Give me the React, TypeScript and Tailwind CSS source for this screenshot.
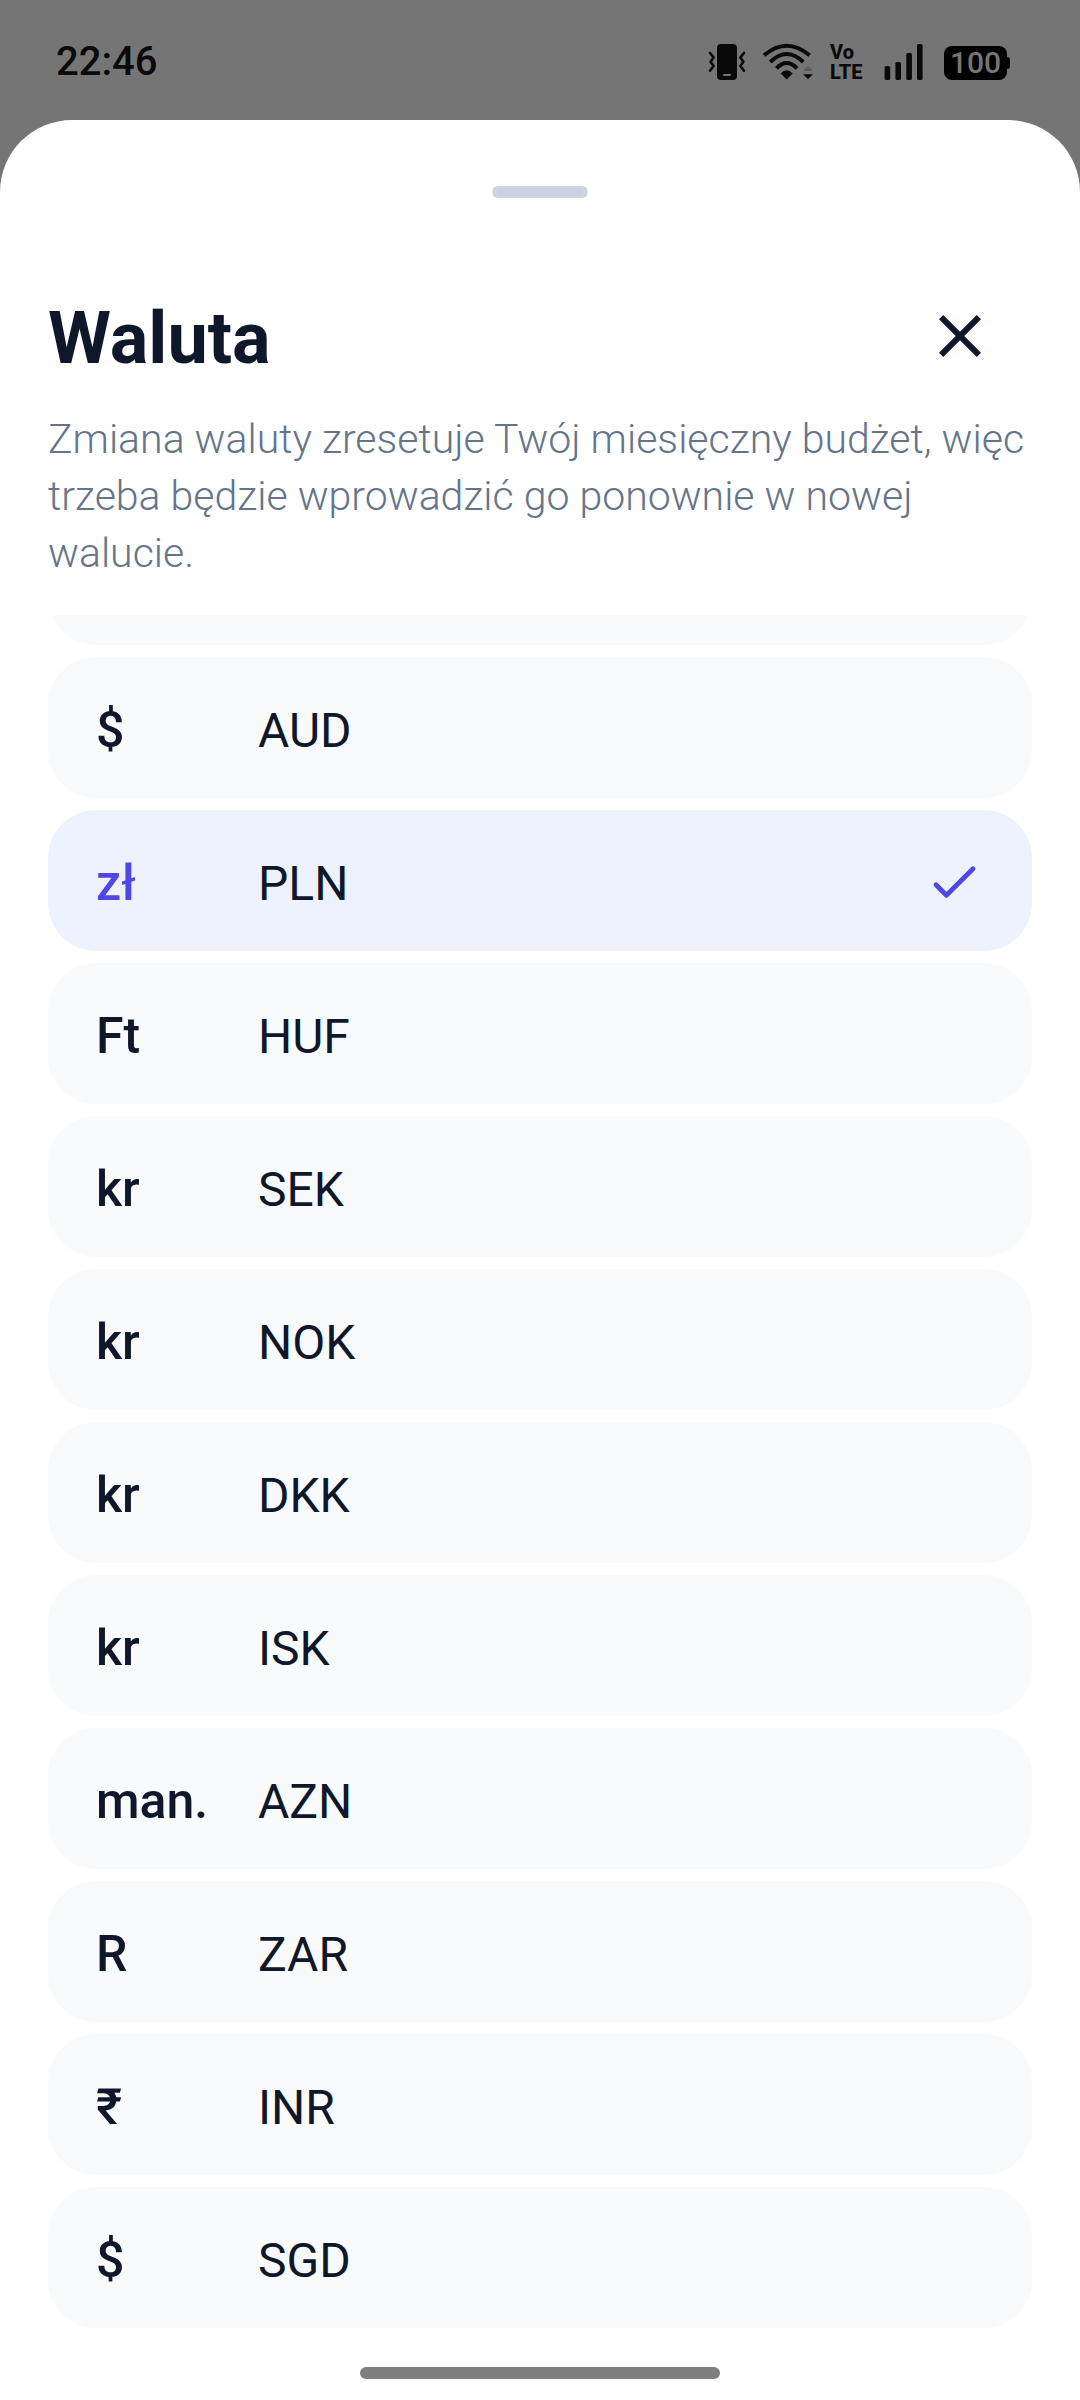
import { useState } from "react";
import clsx from "clsx";

type Currency = { code: string; symbol: string };

const currencies: Currency[] = [
  { code: "AUD", symbol: "$" },
  { code: "PLN", symbol: "zł" },
  { code: "HUF", symbol: "Ft" },
  { code: "SEK", symbol: "kr" },
  { code: "NOK", symbol: "kr" },
  { code: "DKK", symbol: "kr" },
  { code: "ISK", symbol: "kr" },
  { code: "AZN", symbol: "man." },
  { code: "ZAR", symbol: "R" },
  { code: "INR", symbol: "₹" },
  { code: "SGD", symbol: "$" },
];

function VibrateIcon() {
  return (
    <svg className="w-[38px] h-9" viewBox="0 0 38 36" fill="none">
      <path d="M13 0h12a4 4 0 0 1 4 4v28a4 4 0 0 1-4 4H13a4 4 0 0 1-4-4V4a4 4 0 0 1 4-4Z" fill="#0a0a0a" />
      <path d="M16 31h6" stroke="#757575" strokeWidth="2" strokeLinecap="round" />
      <path d="m2 9 3.6 4.4-3 4.4 3 4.2L2 26.7M36 9l-3.6 4.4 3 4.4-3 4.2 3.6 4.7" stroke="#0a0a0a" strokeWidth="2.6" strokeLinecap="round" strokeLinejoin="round" />
    </svg>
  );
}

function WifiIcon() {
  return (
    <svg className="w-[52px] h-[37px]" viewBox="0 0 52 37" fill="none">
      <path d="M2 12.3Q24.7-6.9 47.6 12.3M8.3 19Q24.7 3 41.3 19M14.5 25.3Q24.7 14.7 35 25.3" stroke="#0a0a0a" strokeWidth="4" />
      <path d="m24.7 36.4-6-6q6-6.4 12 0Z" fill="#0a0a0a" />
      <path d="m41 28 5-5 5 5Z" fill="#5c5c5c" />
      <path d="M41 31.3h10l-5 5Z" fill="#0a0a0a" />
    </svg>
  );
}

function VolteIcon() {
  return (
    <svg className="w-[34px] h-9 overflow-visible font-[Roboto,sans-serif] font-extrabold text-[20px]" viewBox="0 0 34 36" fill="#0a0a0a">
      <text x="0" y="15">Vo</text>
      <text x="0" y="35">LTE</text>
    </svg>
  );
}

function SignalIcon() {
  return (
    <svg className="w-10 h-9" viewBox="0 0 40 36" fill="#0a0a0a">
      <rect x="0.6" y="22" width="5.6" height="14" rx="1.6" />
      <rect x="11.4" y="18" width="5.6" height="18" rx="1.6" />
      <rect x="22.3" y="9" width="5.6" height="27" rx="1.6" />
      <rect x="33" y="0" width="5.6" height="36" rx="1.6" />
    </svg>
  );
}

function StatusBar() {
  return (
    <header className="h-30 shrink-0 flex items-end justify-between pl-14 pr-[70px] pb-10">
      <time className="text-[40px] leading-9 font-medium text-[#0a0a0a]">22:46</time>
      <div className="flex items-end">
        <VibrateIcon />
        <div className="ml-4"><WifiIcon /></div>
        <div className="ml-4"><VolteIcon /></div>
        <div className="ml-5"><SignalIcon /></div>
        <div className="ml-5 flex items-center">
          <span className="w-[63px] h-[34px] rounded-lg bg-black text-[#757575] text-[30px] leading-[34px] font-medium text-center">100</span>
          <span className="w-[3px] h-3 rounded-r-sm bg-black" />
        </div>
      </div>
    </header>
  );
}

function CurrencyRow({ currency, selected, onSelect }: { currency: Currency; selected: boolean; onSelect: () => void }) {
  return (
    <li className="shrink-0">
      <button
        type="button"
        aria-pressed={selected}
        onClick={onSelect}
        className={clsx("w-full h-[141px] px-12 rounded-[48px] flex items-center text-left", selected ? "bg-[#eef2ff]" : "bg-[#f8fafc]")}
      >
        <span className={clsx("w-[162px] pt-1 text-[50px] leading-[60px] font-medium", selected ? "text-[#4f46e5]" : "text-[#0f172a]")}>
          {currency.symbol}
        </span>
        <span className="flex-1 pt-1.5 text-[48px] leading-[60px] text-[#0f172a]">{currency.code}</span>
        {selected && (
          <svg className="size-[60px]" viewBox="0 0 60 60" fill="none" stroke="#4f46e5" strokeWidth="4.8" strokeLinecap="round" strokeLinejoin="round">
            <path d="M12 33.8 22.4 44.2 49 17.8" />
          </svg>
        )}
      </button>
    </li>
  );
}

export default function App() {
  const [selected, setSelected] = useState("PLN");

  return (
    <div className="h-screen flex flex-col bg-[#757575] font-[Roboto,sans-serif]">
      <StatusBar />
      <main className="flex-1 min-h-0 flex flex-col px-12 bg-white rounded-t-[72px]">
        <div className="mt-[66px] w-24 h-3 shrink-0 self-center rounded-full bg-[#cbd5e1]" />

        <div className="mt-[102px] flex items-start justify-between">
          <h1 className="text-[72px] leading-[78px] font-bold text-[#0f172a]">Waluta</h1>
          <button type="button" aria-label="Zamknij" className="px-9">
            <svg className="size-18" viewBox="0 0 24 24" fill="#0f172a">
              <path d="M19 6.41 17.59 5 12 10.59 6.41 5 5 6.41 10.59 12 5 17.59 6.41 19 12 13.41 17.59 19 19 17.59 13.41 12z" />
            </svg>
          </button>
        </div>
        <p className="mt-[33px] text-[41px] leading-[57px] font-light text-[#64748b]">
          Zmiana waluty zresetuje Twój miesięczny budżet, więc trzeba będzie wprowadzić go ponownie w nowej walucie.
        </p>

        <ul className="mt-[33px] flex-1 min-h-0 flex flex-col justify-end gap-3 overflow-hidden">
          <li aria-hidden="true" className="shrink-0 h-[141px] rounded-[48px] bg-[#f8fafc]" />
          {currencies.map((c) => (
            <CurrencyRow key={c.code} currency={c} selected={c.code === selected} onSelect={() => setSelected(c.code)} />
          ))}
        </ul>

        <div className="mt-[39px] mb-[21px] w-[360px] h-3 shrink-0 self-center rounded-full bg-[#7f7f7f]" />
      </main>
    </div>
  );
}
